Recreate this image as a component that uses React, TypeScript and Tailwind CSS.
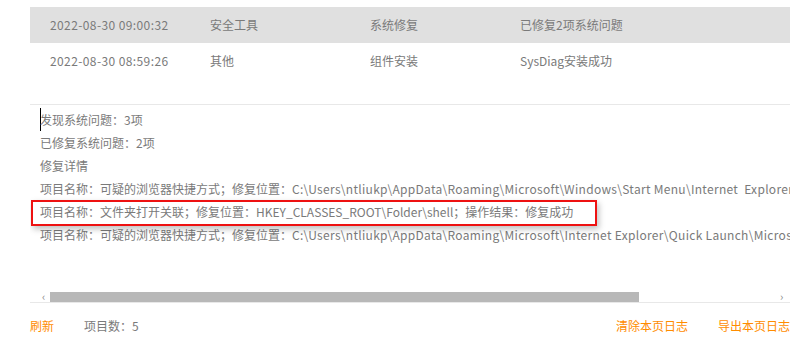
import React from 'react';

const logRows = [
  { time: '2022-08-30 09:00:32', source: '安全工具', kind: '系统修复', result: '已修复2项系统问题', active: true },
  { time: '2022-08-30 08:59:26', source: '其他', kind: '组件安装', result: 'SysDiag安装成功', active: false },
];

const detailLines: { head: string; path?: string; tail?: string; wide?: boolean }[] = [
  { head: '已修复系统问题：2项' },
  { head: '修复详情' },
  {
    head: '项目名称：可疑的浏览器快捷方式；修复位置：',
    path: 'C:\\Users\\ntliukp\\AppData\\Roaming\\Microsoft\\Windows\\Start Menu\\Internet  Explorer\\Quick Launch\\Microsoft Edge.lnk',
    tail: '；操作结果：修复成功',
    wide: true,
  },
  {
    head: '项目名称：文件夹打开关联；修复位置：',
    path: 'HKEY_CLASSES_ROOT\\Folder\\shell',
    tail: '；操作结果：修复成功',
  },
  {
    head: '项目名称：可疑的浏览器快捷方式；修复位置：',
    path: 'C:\\Users\\ntliukp\\AppData\\Roaming\\Microsoft\\Internet Explorer\\Quick Launch\\Microsoft Edge.lnk',
    tail: '；操作结果：修复成功',
    wide: true,
  },
];

export default function App() {
  return (
    <div
      className="relative w-[806px] h-[348px] overflow-hidden bg-white text-[12px] text-[#7a7a7a]"
      style={{ fontFamily: '"Noto Sans CJK SC", "Noto Sans", sans-serif' }}
    >
      <div className="ml-[30px] w-[760px] pt-[7px]">
        {/* Log list */}
        <div className="h-[98px] border-b border-[#e8e8e8]">
          {logRows.map((row) => (
            <div
              key={row.time}
              className={`flex h-[36px] items-center ${row.active ? 'bg-[#e0e0e0]' : 'bg-white'}`}
            >
              <span className="w-[180px] pl-[20px] tracking-[0.4px]">{row.time}</span>
              <span className="w-[160px]">{row.source}</span>
              <span className="w-[150px]">{row.kind}</span>
              <span>{row.result}</span>
            </div>
          ))}
        </div>

        {/* Detail text */}
        <div className="relative h-[198px] overflow-hidden pt-[3px] pl-[10px] leading-[23px] whitespace-pre">
          <div className="flex items-center">
            <span className="inline-block w-px h-[23px] bg-black -mr-px" />
            <span>发现系统问题：3项</span>
          </div>
          {detailLines.map((line, i) => (
            <div key={i}>
              {line.head}
              {line.path && <span className={line.wide ? 'tracking-[0.3px]' : ''}>{line.path}</span>}
              {line.tail}
            </div>
          ))}
          <div className="absolute left-[1px] top-[95px] w-[566px] h-[26px] border-2 border-[#ee1111] shadow-[2px_3px_6px_rgba(0,0,0,0.25)]" />

          {/* horizontal scrollbar */}
          <div className="absolute left-0 right-0 bottom-0 flex h-[12px] items-center border-b border-[#e8e8e8] bg-white">
            <span className="w-[20px] pl-[12px] text-[11px] leading-none text-[#888]">‹</span>
            <div className="h-[10px] w-[589px] bg-[#b8b8b8]" />
            <div className="flex-1" />
            <span className="w-[10px] text-[11px] leading-none text-[#888]">›</span>
          </div>
        </div>

        {/* Footer */}
        <div className="flex h-[45px] items-center">
          <span className="text-[#ff8c00]">刷新</span>
          <span className="ml-[30px]">项目数：5</span>
          <div className="flex-1" />
          <span className="text-[#ff8c00]">清除本页日志</span>
          <span className="ml-[30px] text-[#ff8c00]">导出本页日志</span>
        </div>
      </div>
    </div>
  );
}
